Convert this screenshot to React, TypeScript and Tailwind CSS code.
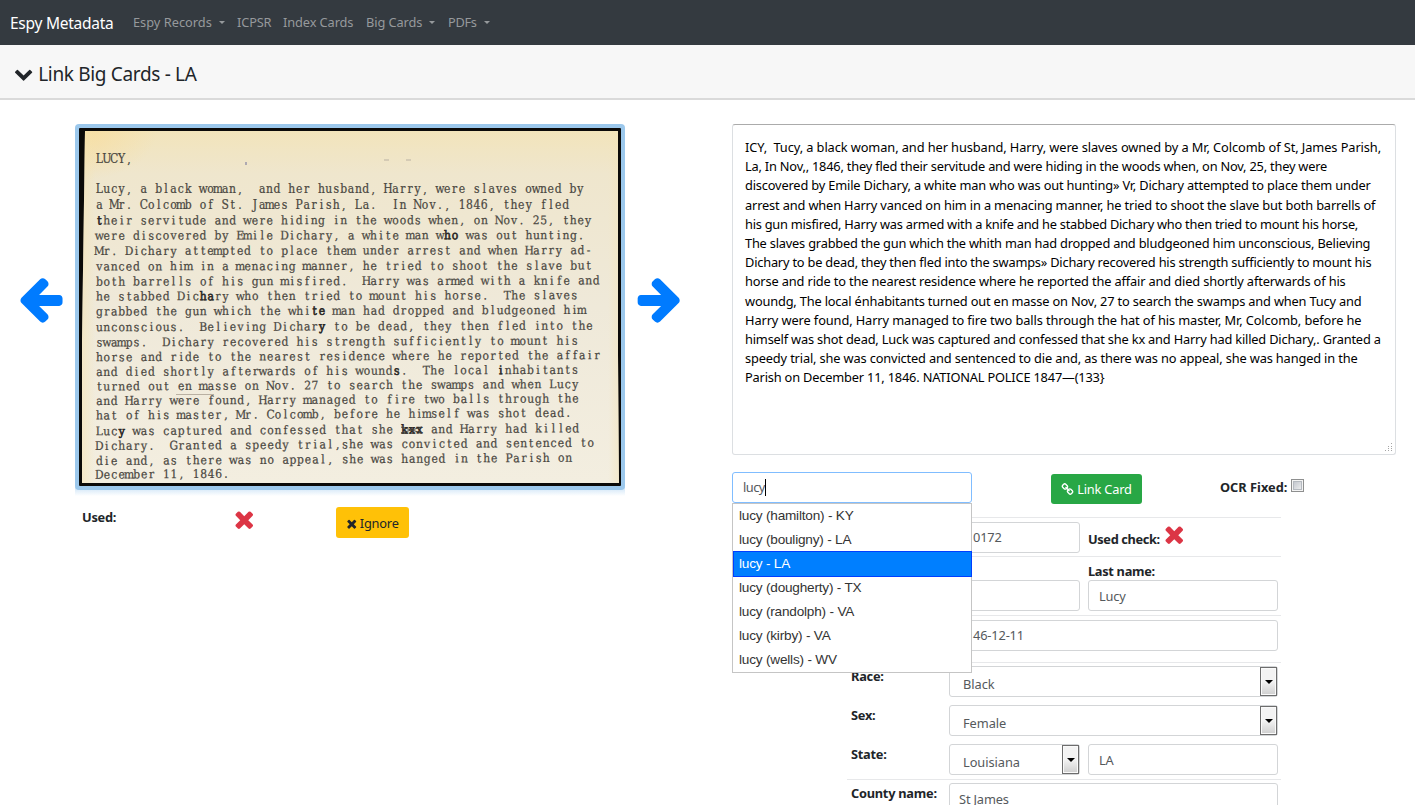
import type { ReactNode } from "react";

const icons = {
  arrowLeft:
    "M1664 896v128q0 53-32.5 90.5t-84.5 37.5h-704l293 294q38 36 38 90t-38 90l-75 76q-37 37-90 37-52 0-91-37l-651-652q-37-37-37-90 0-52 37-91l651-650q38-38 91-38 52 0 90 38l75 74q38 38 38 91t-38 91l-293 293h704q52 0 84.5 37.5t32.5 90.5z",
  times:
    "M1490 1322q0 40-28 68l-136 136q-28 28-68 28t-68-28l-294-294-294 294q-28 28-68 28t-68-28l-136-136q-28-28-28-68t28-68l294-294-294-294q-28-28-28-68t28-68l136-136q28-28 68-28t68 28l294 294 294-294q28-28 68-28t68 28l136 136q28 28 28 68t-28 68l-294 294 294 294q28 28 28 68z",
  chevronDown:
    "M1683 808l-742 741q-19 19-45 19t-45-19l-742-741q-19-19-19-45.5t19-45.5l166-165q19-19 45-19t45 19l531 531 531-531q19-19 45-19t45 19l166 165q19 19 19 45.5t-19 45.5z",
  link: "M1520 1216q0-40-28-68l-208-208q-28-28-68-28-42 0-72 32 3 3 19 18.5t21.5 21.5 15 19 13 25.5 3.5 27.5q0 40-28 68t-68 28q-15 0-27.5-3.5t-25.5-13-19-15-21.5-21.5-18.5-19q-33 31-33 73 0 40 28 68l206 207q27 27 68 27 40 0 68-26l147-146q28-28 28-67zm-703-705q0-40-28-68l-206-207q-28-28-68-28-39 0-68 27l-147 146q-28 28-28 67 0 40 28 68l208 208q27 27 68 27 42 0 72-31-3-3-19-18.5t-21.5-21.5-15-19-13-25.5-3.5-27.5q0-40 28-68t68-28q15 0 27.5 3.5t25.5 13 19 15 21.5 21.5 18.5 19q33-31 33-73zm895 705q0 120-85 203l-147 146q-83 83-203 83-121 0-204-85l-206-207q-83-83-83-203 0-123 88-209l-88-88q-86 88-208 88-120 0-204-84l-208-208q-84-84-84-204t85-203l147-146q83-83 203-83 121 0 204 85l206 207q83 83 83 203 0 123-88 209l88 88q86-88 208-88 120 0 204 84l208 208q84 84 84 204z",
};

function Icon({ name, size, className = "" }: { name: keyof typeof icons; size: number; className?: string }) {
  return (
    <svg width={size} height={size} viewBox="0 0 1792 1792" fill="currentColor" className={`shrink-0 ${className}`}>
      <path d={icons[name]} />
    </svg>
  );
}

const ocrLines: [string, string][] = [
  ["tracking-[-0.085px]", "ICY,  Tucy, a black woman, and her husband, Harry, were slaves owned by a Mr, Colcomb of St, James Parish,"],
  ["tracking-[-0.2px]", "La, In Nov,, 1846, they fled their servitude and were hiding in the woods when, on Nov, 25, they were"],
  ["tracking-[-0.165px]", "discovered by Emile Dichary, a white man who was out hunting» Vr, Dichary attempted to place them under"],
  ["tracking-[-0.15px]", "arrest and when Harry vanced on him in a menacing manner, he tried to shoot the slave but both barrells of"],
  ["tracking-[-0.24px]", "his gun misfired, Harry was armed with a knife and he stabbed Dichary who then tried to mount his horse,"],
  ["tracking-[-0.2px]", "The slaves grabbed the gun which the whith man had dropped and bludgeoned him unconscious, Believing"],
  ["tracking-[-0.2px]", "Dichary to be dead, they then fled into the swamps» Dichary recovered his strength sufficiently to mount his"],
  ["tracking-[-0.14px]", "horse and ride to the nearest residence where he reported the affair and died shortly afterwards of his"],
  ["tracking-[-0.17px]", "woundg, The local énhabitants turned out en masse on Nov, 27 to search the swamps and when Tucy and"],
  ["tracking-[-0.1px]", "Harry were found, Harry managed to fire two balls through the hat of his master, Mr, Colcomb, before he"],
  ["tracking-[-0.18px]", "himself was shot dead, Luck was captured and confessed that she kx and Harry had killed Dichary,. Granted a"],
  ["tracking-[-0.145px]", "speedy trial, she was convicted and sentenced to die and, as there was no appeal, she was hanged in the"],
  ["tracking-[-0.18px]", "Parish on December 11, 1846. NATIONAL POLICE 1847—(133}"],
];

// Typed lines of the card: baseline and text; characters between bars were struck twice.
const cardLines: [number, string][] = [
  [163, "LUCY,"],
  [193.3, "Lucy, a black woman,  and her husband, Harry, were slaves owned by"],
  [209, "a Mr. Colcomb of St. James Parish, La.  In Nov., 1846, they fled"],
  [224.5, "|t|heir servitude and were hiding in the woods when, on Nov. 25, they"],
  [239.7, "were discovered by Emile Dichary, a white man w|ho| was out hunting."],
  [255, "Mr. Dichary attempted to place them under arrest and when Harry ad-"],
  [270.5, "vanced on him in a menacing manner, he tried to shoot the slave but"],
  [285.7, "both barrells of his gun misfired.  Harry was armed with a knife and"],
  [300.5, "he stabbed Dic|ha|ry who then tried to mount his horse.  The slaves"],
  [315.5, "grabbed the gun which the whi|te| man had dropped and bludgeoned him"],
  [331.3, "unconscious.  Believing Dichar|y| to be dead, they then fled into the"],
  [346.5, "swamps.  Dichary recovered his strength sufficiently to mount his"],
  [361.3, "horse and ride to the nearest residence where he reported the affair"],
  [376, "and died shortly afterwards of his wound|s|.  The local |i|nhabitants"],
  [390.5, "turned out en masse on Nov. 27 to search the swamps and when Lucy"],
  [405, "and Harry were found, Harry managed to fire two balls through the"],
  [419.5, "hat of his master, Mr. Colcomb, before he himself was shot dead."],
  [435.3, "Luc|y| was captured and confessed that she |kxx| and Harry had killed"],
  [450, "Dichary.  Granted a speedy trial,she was convicted and sentenced to"],
  [465, "die and, as there was no appeal, she was hanged in the Parish on"],
  [478.7, "December 11, 1846."],
];

function TypedLine({ y, text }: { y: number; text: string }) {
  const parts = text.split("|");
  const length = parts.join("").length;
  const drift = Math.max(0, y - 200) / 270;
  const pitch = 7.4 + 0.05 * drift;
  const xs = Array.from({ length }, (_, i) => (99.4 + i * pitch).toFixed(2)).join(" ");
  return (
    <text x={xs} y={y} textAnchor="middle" transform={`rotate(${-0.4 * drift} 96 ${y})`} xmlSpace="preserve">
      {parts.map((part, i) =>
        i % 2 ? (
          <tspan key={i} fill="#2b2926" stroke="#2b2926" strokeWidth="0.6">
            {part}
          </tspan>
        ) : (
          part
        ),
      )}
    </text>
  );
}

function ScannedCard() {
  return (
    <svg width="550" height="374" viewBox="75 123 550 374" className="block" role="img">
      <defs>
        <linearGradient id="paper" x1="0" y1="0" x2="0" y2="1">
          <stop offset="0" stopColor="#f2e4bb" />
          <stop offset="0.12" stopColor="#efe6cd" />
          <stop offset="0.5" stopColor="#efe9d9" />
          <stop offset="1" stopColor="#f3eee0" />
        </linearGradient>
        <radialGradient id="age" cx="0" cy="0" r="0.14">
          <stop offset="0" stopColor="#f9dc98" stopOpacity="0.7" />
          <stop offset="1" stopColor="#f9dc98" stopOpacity="0" />
        </radialGradient>
        <linearGradient id="edge" x1="0" y1="0" x2="1" y2="0">
          <stop offset="0" stopColor="#f6e4b0" stopOpacity="0.5" />
          <stop offset="0.025" stopColor="#f6e4b0" stopOpacity="0" />
          <stop offset="0.98" stopColor="#f3e4b8" stopOpacity="0" />
          <stop offset="1" stopColor="#f3e4b8" stopOpacity="0.5" />
        </linearGradient>
        <linearGradient id="glow" x1="0" y1="0" x2="0" y2="1">
          <stop offset="0" stopColor="#9ac8ee" stopOpacity="0.5" />
          <stop offset="1" stopColor="#9ac8ee" stopOpacity="0" />
        </linearGradient>
      </defs>
      <rect x="75" y="487" width="550" height="9" fill="url(#glow)" />
      <rect x="75" y="124" width="550" height="366" rx="4" fill="#9cc8ec" />
      <rect x="79" y="128" width="542" height="358" rx="1" fill="#0b0a08" />
      <path d="M85 131H618V355L619 483H82V340Z" fill="url(#paper)" />
      <path d="M85 131H618V355L619 483H82V340Z" fill="url(#age)" />
      <path d="M85 131H618V355L619 483H82V340Z" fill="url(#edge)" />
      <path d="M176 394.5H214M384 160h5M406 160h5" stroke="#b9b0a2" strokeWidth="1" />
      <path d="M246 162v3" stroke="#9994a8" strokeWidth="1.5" />
      <g
        fill="#4a4741"
        stroke="#4a4741"
        strokeWidth="0.2"
        className="font-['DejaVu_Serif_Condensed','DejaVu_Serif',serif] text-[12px] [font-stretch:condensed] [font-variant-ligatures:none]"
      >
        {cardLines.map(([y, text]) => (
          <TypedLine key={y} y={y} text={text} />
        ))}
      </g>
      <path d="M401 427l21 6M401 433l21-6" stroke="#45413b" strokeWidth="1" />
    </svg>
  );
}

function Caret() {
  return <span className="ml-[7px] inline-block border-x-[3px] border-t-[3px] border-x-transparent border-t-current align-[3px]" />;
}

function Label({ children }: { children?: ReactNode }) {
  return (
    <div className="w-[98px] shrink-0 pl-[4px] leading-[21px] font-bold tracking-[-0.25px] whitespace-nowrap">{children}</div>
  );
}

function Field({ children, className }: { children?: ReactNode; className: string }) {
  return (
    <div className={`h-[31px] shrink-0 rounded-[3px] border border-[#d3d5d7] bg-white tracking-[-0.15px] text-[#55595c] ${className}`}>
      {children}
    </div>
  );
}

function Select({ children, className }: { children: ReactNode; className: string }) {
  return (
    <div className={`flex h-[31px] shrink-0 justify-between rounded-[3px] border border-[#d3d5d7] bg-white pl-[13px] leading-[35px] tracking-[-0.05px] text-[#55595c] ${className}`}>
      <span>{children}</span>
      <span className="flex h-[29px] w-[17px] items-center justify-center border border-[#6d6d6d] bg-linear-to-b from-[#f3f3f3] from-50% to-[#cfcfcf] shadow-[inset_0_0_0_1px_#fafafa]">
        <span className="border-x-4 border-t-4 border-x-transparent border-t-black" />
      </span>
    </div>
  );
}

const options = [
  "lucy (hamilton) - KY",
  "lucy (bouligny) - LA",
  "lucy - LA",
  "lucy (dougherty) - TX",
  "lucy (randolph) - VA",
  "lucy (kirby) - VA",
  "lucy (wells) - WV",
];

export default function App() {
  return (
    <div className="flex h-[805px] w-full flex-col overflow-hidden bg-white font-['Noto_Sans',sans-serif] text-[12.8px] text-[#212529]">
      <nav className="flex h-[45px] shrink-0 items-center bg-[#343a40] pl-[10px] text-[#96999c]">
        <span className="w-[123px] pt-[2px] text-[15.5px] tracking-[-0.25px] whitespace-nowrap text-white">Espy Metadata</span>
        <span className="w-[104px] whitespace-nowrap">Espy Records<Caret /></span>
        <span className="w-[46px] tracking-[-0.15px] whitespace-nowrap">ICPSR</span>
        <span className="w-[83px] tracking-[-0.1px] whitespace-nowrap">Index Cards</span>
        <span className="w-[82px] tracking-[-0.1px] whitespace-nowrap">Big Cards<Caret /></span>
        <span className="tracking-[-0.3px] whitespace-nowrap">PDFs<Caret /></span>
      </nav>
      <header className="flex h-[55px] shrink-0 items-center border-b-2 border-[#dadada] bg-[#f7f7f7] pt-[5px] pl-[14px]">
        <Icon name="chevronDown" size={19.2} className="-mt-px" />
        <h1 className="ml-[5px] text-[19px] tracking-[-0.33px]">Link Big Cards - LA</h1>
      </header>

      <main className="flex pt-[24px]">
        <section className="flex w-[732px] shrink-0 flex-col">
          <div className="-mt-px flex items-start pl-[14.6px]">
            <Icon name="arrowLeft" size={51.2} className="mt-[150px] text-[#007bff]" />
            <div className="ml-[9.2px]"><ScannedCard /></div>
            <Icon name="arrowLeft" size={51.2} className="mt-[150px] ml-[9.4px] -scale-x-100 text-[#007bff]" />
          </div>
          <div className="mt-[10px] flex items-start pl-[82px]">
            <span className="w-[149px] leading-[21px] font-bold tracking-[-0.25px]">Used:</span>
            <Icon name="times" size={26.5} className="-mt-[1px] text-[#dc3545]" />
            <button className="ml-[78.5px] flex h-[31px] w-[73px] items-center justify-center gap-px rounded-[3px] bg-[#ffc107] pt-[2px]">
              <Icon name="times" size={13.5} className="-ml-px" />
              <span className="tracking-[-0.2px]">Ignore</span>
            </button>
          </div>
        </section>

        <section className="flex w-[664px] shrink-0 flex-col">
          <div className="relative h-[331px] rounded-[3px] border border-[#dcdfe2] border-t-[#ababab] pt-[13px] pl-[12px] text-black">
            {ocrLines.map(([tracking, line]) => (
              <p key={line} className={`h-[19.2px] leading-[19.2px] whitespace-pre ${tracking}`}>{line}</p>
            ))}
            <svg width="9" height="9" className="absolute right-[2px] bottom-[2px]" fill="#a5a5a5">
              <path d="M7 0h1v1h-1zM4 3h1v1h-1zM7 3h1v1h-1zM1 7h1v1h-1zM4 7h1v1h-1zM7 7h1v1h-1zM4 5h1v1h-1zM7 5h1v1h-1z" />
            </svg>
          </div>

          <div className="mt-[17px] flex items-start">
            <div className="relative w-[240px]">
              <div className="flex h-[31px] items-center rounded-[3px] border border-[#80bdff] bg-white pl-[10px] text-[#55595c]">
                <span className="tracking-[-0.5px]">lucy</span>
                <span className="h-[17px] w-px bg-black" />
              </div>
              <ul className="absolute top-[31px] left-0 z-10 h-[170px] w-[240px] border border-[#c5c5c5] bg-white font-['Liberation_Sans',sans-serif] text-[13.6px] tracking-[-0.2px] text-[#333]">
                {options.map((o) => (
                  <li
                    key={o}
                    className={
                      o === "lucy - LA"
                        ? "-my-px -mr-px h-[26px] border border-[#003eff] bg-[#007fff] pl-[5px] leading-[24px] whitespace-nowrap text-white"
                        : "h-[24px] pl-[6px] leading-[24px] whitespace-nowrap"
                    }
                  >
                    {o}
                  </li>
                ))}
              </ul>
            </div>
            <button className="mt-[2px] ml-[79px] flex h-[30px] w-[91px] items-center justify-center gap-[3px] rounded-[3px] bg-[#28a745] pt-px text-white">
              <Icon name="link" size={13} />
              <span className="tracking-[-0.2px]">Link Card</span>
            </button>
            <span className="mt-[5px] ml-[78px] w-[71px] leading-[20px] font-bold whitespace-nowrap">OCR Fixed:</span>
            <span className="mt-[7px] h-[13px] w-[13px] border border-[#8e8f8f] bg-linear-to-br from-[#b9bec6] to-[#f6f6f6] shadow-[inset_0_0_0_1px_#f4f4f4,inset_0_0_0_2px_#b5bac0]" />
          </div>

          <div className="ml-[115px] flex w-[434px] flex-col pt-[13px]">
            <div className="flex h-[39px] items-start border-t border-[#e7e8ea] pt-[4px]">
              <Label />
              <Field className="ml-[4px] w-[131px] pl-[23px] leading-[29px]">0172</Field>
              <span className="mt-[7px] ml-[8px] w-[73px] leading-[20px] font-bold tracking-[-0.37px] whitespace-nowrap">Used check:</span>
              <Icon name="times" size={26.5} className="-mt-[1px] text-[#dc3545]" />
            </div>
            <div className="flex h-[59px] items-end border-t border-[#e7e8ea] pb-[4px]">
              <Label />
              <Field className="ml-[4px] w-[131px]" />
              <div className="ml-[8px] flex flex-col">
                <span className="leading-[18px] font-bold tracking-[-0.3px]">Last name:</span>
                <Field className="w-[190px] pl-[10px] leading-[31px]">Lucy</Field>
              </div>
            </div>
            <div className="flex h-[47px] items-start border-t border-[#e7e8ea] pt-[4px]">
              <Label />
              <Field className="ml-[4px] h-[30px] w-[329px] pl-[23px] leading-[29px]">46-12-11</Field>
            </div>
            <div className="flex h-[43px] items-start border-t border-[#e7e8ea] pt-[3px]">
              <Label>Race:</Label>
              <Select className="ml-[4px] w-[329px]">Black</Select>
            </div>
            <div className="flex h-[39px] items-start">
              <Label>Sex:</Label>
              <Select className="ml-[4px] w-[329px]">Female</Select>
            </div>
            <div className="flex h-[35px] items-start">
              <Label>State:</Label>
              <Select className="ml-[4px] w-[131px]">Louisiana</Select>
              <Field className="ml-[8px] w-[190px] pl-[10px] leading-[31px]">LA</Field>
            </div>
            <div className="flex h-[40px] items-start border-t border-[#e7e8ea] pt-[3px]">
              <Label>County name:</Label>
              <Field className="ml-[4px] w-[329px] pl-[9px] leading-[30px]">St James</Field>
            </div>
          </div>
        </section>
      </main>
    </div>
  );
}
